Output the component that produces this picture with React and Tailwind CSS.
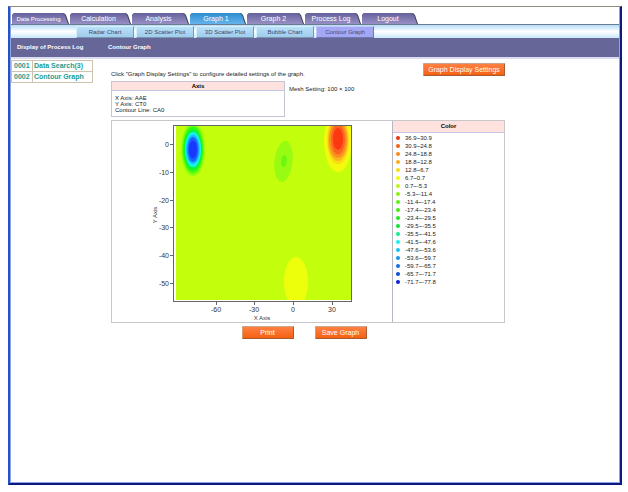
import { useState } from 'react'
import clsx from 'clsx'

const tabs = [
  { label: 'Data Processing', width: 'w-[57px]', text: 'text-[6px]' },
  { label: 'Calculation', width: 'w-[61px]', text: 'text-[7px]' },
  { label: 'Analysis', width: 'w-[57px]', text: 'text-[7px]' },
  { label: 'Graph 1', width: 'w-[56px]', text: 'text-[7px]' },
  { label: 'Graph 2', width: 'w-[57px]', text: 'text-[7px]' },
  { label: 'Process Log', width: 'w-[56px]', text: 'text-[7px]' },
  { label: 'Logout', width: 'w-[56px]', text: 'text-[7px]' },
]

const graphTypes = ['Radar Chart', '2D Scatter Plot', '3D Scatter Plot', 'Bubble Chart', 'Contour Graph']

const processLog = [
  { id: '0001', name: 'Data Search(3)' },
  { id: '0002', name: 'Contour Graph' },
]

const legend = [
  { range: '36.9~30.9', color: '#ee3311' },
  { range: '30.9~24.8', color: '#f26018' },
  { range: '24.8~18.8', color: '#f58a1e' },
  { range: '18.8~12.8', color: '#f9ae1c' },
  { range: '12.8~6.7', color: '#fbdc10' },
  { range: '6.7~0.7', color: '#f2fb0c' },
  { range: '0.7~-5.3', color: '#bff516' },
  { range: '-5.3~-11.4', color: '#8cf214' },
  { range: '-11.4~-17.4', color: '#66ee12' },
  { range: '-17.4~-23.4', color: '#44ec14' },
  { range: '-23.4~-29.5', color: '#22ea1c' },
  { range: '-29.5~-35.5', color: '#0ce234' },
  { range: '-35.5~-41.5', color: '#12ee90' },
  { range: '-41.5~-47.6', color: '#1ceef0' },
  { range: '-47.6~-53.6', color: '#18c4ee' },
  { range: '-53.6~-59.7', color: '#1894e6' },
  { range: '-59.7~-65.7', color: '#1470e0' },
  { range: '-65.7~-71.7', color: '#104edc' },
  { range: '-71.7~-77.8', color: '#0c1edc' },
]

// radii go from the outermost band to the core
const lowBands = [
  [12, 27, '#9cff10'],
  [11, 25, '#6cff10'],
  [10, 23, '#30fa10'],
  [9, 20, '#08f43c'],
  [8, 18, '#10f69c'],
  [8, 17, '#18f4f0'],
  [7, 15, '#18c4ff'],
  [6, 13, '#1890ff'],
  [5, 12, '#1860ff'],
  [4, 9, '#1838ff'],
]

const highBands = [
  [14, 31, '#f4fa0c'],
  [11, 24, '#fbdc14'],
  [10, 21, '#fab41c'],
  [9, 18, '#fa8e20'],
  [7, 15, '#fa6420'],
  [5, 11, '#fc3810'],
]

const yTicks = [
  [0, 24],
  [-10, 52],
  [-20, 80],
  [-30, 107],
  [-40, 135],
  [-50, 163],
]

const xTicks = [
  [-60, 106],
  [-30, 144],
  [0, 183],
  [30, 222],
]

function OrangeButton({ children, className }) {
  return (
    <button
      type="button"
      className={clsx(
        'h-[13px] rounded-[1px] border border-t-[#c9a48e] border-r-[#a85a34] border-b-[#a85a34] border-l-[#d99a78] bg-linear-to-b from-[#ff8040] to-[#f4600c] text-center text-[7px] leading-[10px] text-white',
        className,
      )}
    >
      {children}
    </button>
  )
}

function ContourPlot() {
  return (
    <svg viewBox="1 0 280 201" className="block h-auto w-full" role="img" aria-label="Contour Graph">
      <defs>
        <clipPath id="plot-area">
          <rect x="65" y="5" width="175" height="174" />
        </clipPath>
      </defs>
      <g clipPath="url(#plot-area)">
        <rect x="65" y="5" width="175" height="174" fill="#c3ff0d" />
        {lowBands.map(([rx, ry, fill]) => (
          <ellipse key={fill} cx="82" cy="28.5" rx={rx} ry={ry} fill={fill} />
        ))}
        {highBands.map(([rx, ry, fill]) => (
          <ellipse key={fill} cx="227" cy={20 - (31 - ry) * 0.1} rx={rx} ry={ry} fill={fill} />
        ))}
        <ellipse cx="172.5" cy="40.5" rx="9" ry="20.5" fill="#98fb12" transform="rotate(6 172.5 40.5)" />
        <ellipse cx="173" cy="40" rx="2.8" ry="6" fill="#6cf612" transform="rotate(6 173 40)" />
        <ellipse cx="185" cy="161" rx="12" ry="25" fill="#eeff0c" />
      </g>
      <rect x="62.5" y="4.5" width="178" height="176" fill="none" stroke="#666" />
      <g fontSize="6" fill="#333">
        {yTicks.map(([value, y]) => (
          <g key={value}>
            <line x1="59" x2="62" y1={y - 0.5} y2={y - 0.5} stroke="#666" />
            <text x="58" y={y + 2} textAnchor="end" fontSize="7">{value}</text>
          </g>
        ))}
        {xTicks.map(([value, x]) => (
          <g key={value}>
            <line x1={x - 0.5} x2={x - 0.5} y1="181" y2="184" stroke="#666" />
            <text x={x - 1} y="191" textAnchor="middle" fontSize="7">{value}</text>
          </g>
        ))}
        <text x="151" y="199" textAnchor="middle">X Axis</text>
        <text x="46" y="94" textAnchor="middle" transform="rotate(-90 46 94)">Y Axis</text>
      </g>
    </svg>
  )
}

export default function App() {
  const [activeTab, setActiveTab] = useState('Graph 1')
  const [graphType, setGraphType] = useState('Contour Graph')

  return (
    <div className="flex min-h-screen bg-white pt-[6px] pr-[6px] pb-[7px] pl-[8px] font-['Liberation_Sans',sans-serif] text-[6px] text-[#222]">
      <div className="flex flex-1 border-t border-r-2 border-b-2 border-l-2 border-t-[#8e8e80] border-r-[#0a1a80] border-b-[#0a1a80] border-l-[#2454c4]">
        <div className="flex flex-1 flex-col border-r border-b border-l border-[#8ca4e4]">
          <nav className="flex gap-px border-b border-[#6c7c90] pt-[6px] pl-px" aria-label="Main">
            {tabs.map((tab) => (
              <button
                key={tab.label}
                type="button"
                onClick={() => setActiveTab(tab.label)}
                className={clsx(
                  'h-[11px] bg-[#3c3c48] pr-px whitespace-nowrap text-white [clip-path:polygon(0_2px,2px_0,calc(100%-5px)_0,calc(100%-3px)_2px,100%_100%,0_100%)]',
                  tab.width,
                  tab.text,
                )}
              >
                <span
                  className={clsx(
                    'block h-full bg-linear-to-b pr-[3px] leading-[12px] [clip-path:polygon(0_2px,2px_0,calc(100%-5px)_0,calc(100%-3px)_2px,100%_100%,0_100%)]',
                    activeTab === tab.label ? 'from-[#2c8cd0] to-[#64b4ec]' : 'from-[#66609c] to-[#9890c4]',
                  )}
                >
                  {tab.label}
                </span>
              </button>
            ))}
          </nav>

          <nav className="flex h-[13px] items-center gap-[2px] bg-linear-to-b from-[#b4dcf8] via-white to-[#c8e8fc] pl-[65px]" aria-label="Graph type">
            {graphTypes.map((type) => (
              <button
                key={type}
                type="button"
                onClick={() => setGraphType(type)}
                className={clsx(
                  'h-[12px] w-[58px] border text-[6px] leading-[10px] whitespace-nowrap text-[#44446c]',
                  graphType === type
                    ? 'border-t-[#c4c8fc] border-r-[#7078b0] border-b-[#7078b0] border-l-[#c4c8fc] bg-[#a4a8f4]'
                    : 'border-t-[#d8f0fc] border-r-[#7898b0] border-b-[#7898b0] border-l-[#d8f0fc] bg-linear-to-b from-[#b8e0f8] to-[#a0ccec]',
                )}
              >
                {type}
              </button>
            ))}
          </nav>

          <header className="flex h-[21px] items-center border-b-2 border-[#dcdcf0] bg-[#666699] pl-[6px] font-bold text-white">
            <span className="w-[91px]">Display of Process Log</span>
            <h1>Contour Graph</h1>
          </header>

          <div className="flex flex-1">
            <aside className="w-[100px] pt-px">
              <table className="w-[82px] border-collapse text-left text-[7px] font-bold text-[#1c9c90]">
                <tbody>
                  {processLog.map((entry) => (
                    <tr key={entry.id} className="h-[11px] leading-[8px]">
                      <td className="w-[21px] border border-[#ccc4b0] pl-[2px]">{entry.id}</td>
                      <td className="border border-[#ccc4b0] pl-px whitespace-nowrap">
                        <a href="#log">{entry.name}</a>
                      </td>
                    </tr>
                  ))}
                </tbody>
              </table>
            </aside>

            <main className="max-w-[394px] flex-1 pt-[4px]">
              <div className="flex justify-between">
                <p className="pt-[7px] leading-[8px]">
                  Click "Graph Display Settings" to configure detailed settings of the graph.
                </p>
                <OrangeButton className="w-[82px]">Graph Display Settings</OrangeButton>
              </div>

              <div className="mt-[3px] flex gap-[4px]">
                <section className="w-[174px] border border-[#c4c4d4]">
                  <h2 className="border-b border-[#c4c4e4] bg-[#ffe2de] text-center leading-[8px] font-bold text-black">Axis</h2>
                  <div className="px-[3px] pt-[4px] pb-[3px] leading-[6px]">
                    <p>X Axis: AAE</p>
                    <p>Y Axis: CT0</p>
                    <p>Contour Line: CA0</p>
                  </div>
                </section>
                <p className="pt-[4px] leading-[8px]">Mesh Setting: 100 × 100</p>
              </div>

              <div className="mt-[3px] grid grid-cols-[5fr_2fr] border border-[#c8c8cc]">
                <section>
                  <ContourPlot />
                </section>
                <section className="border-l border-[#b8b8c4]">
                  <h2 className="border-b border-[#c4c4e4] bg-[#ffe2de] text-center leading-[11px] font-bold text-black">Color</h2>
                  <ul className="pt-px pl-[3px]">
                    {legend.map((item) => (
                      <li key={item.range} className="flex h-[8px] items-center gap-[5px] leading-[8px]">
                        <span className="size-[4px] rounded-full" style={{ backgroundColor: item.color }} />
                        {item.range}
                      </li>
                    ))}
                  </ul>
                </section>
              </div>

              <div className="mt-[3px] flex justify-center gap-[21px] pr-[8px]">
                <OrangeButton className="w-[52px]">Print</OrangeButton>
                <OrangeButton className="w-[52px]">Save Graph</OrangeButton>
              </div>
            </main>
          </div>
        </div>
      </div>
    </div>
  )
}
